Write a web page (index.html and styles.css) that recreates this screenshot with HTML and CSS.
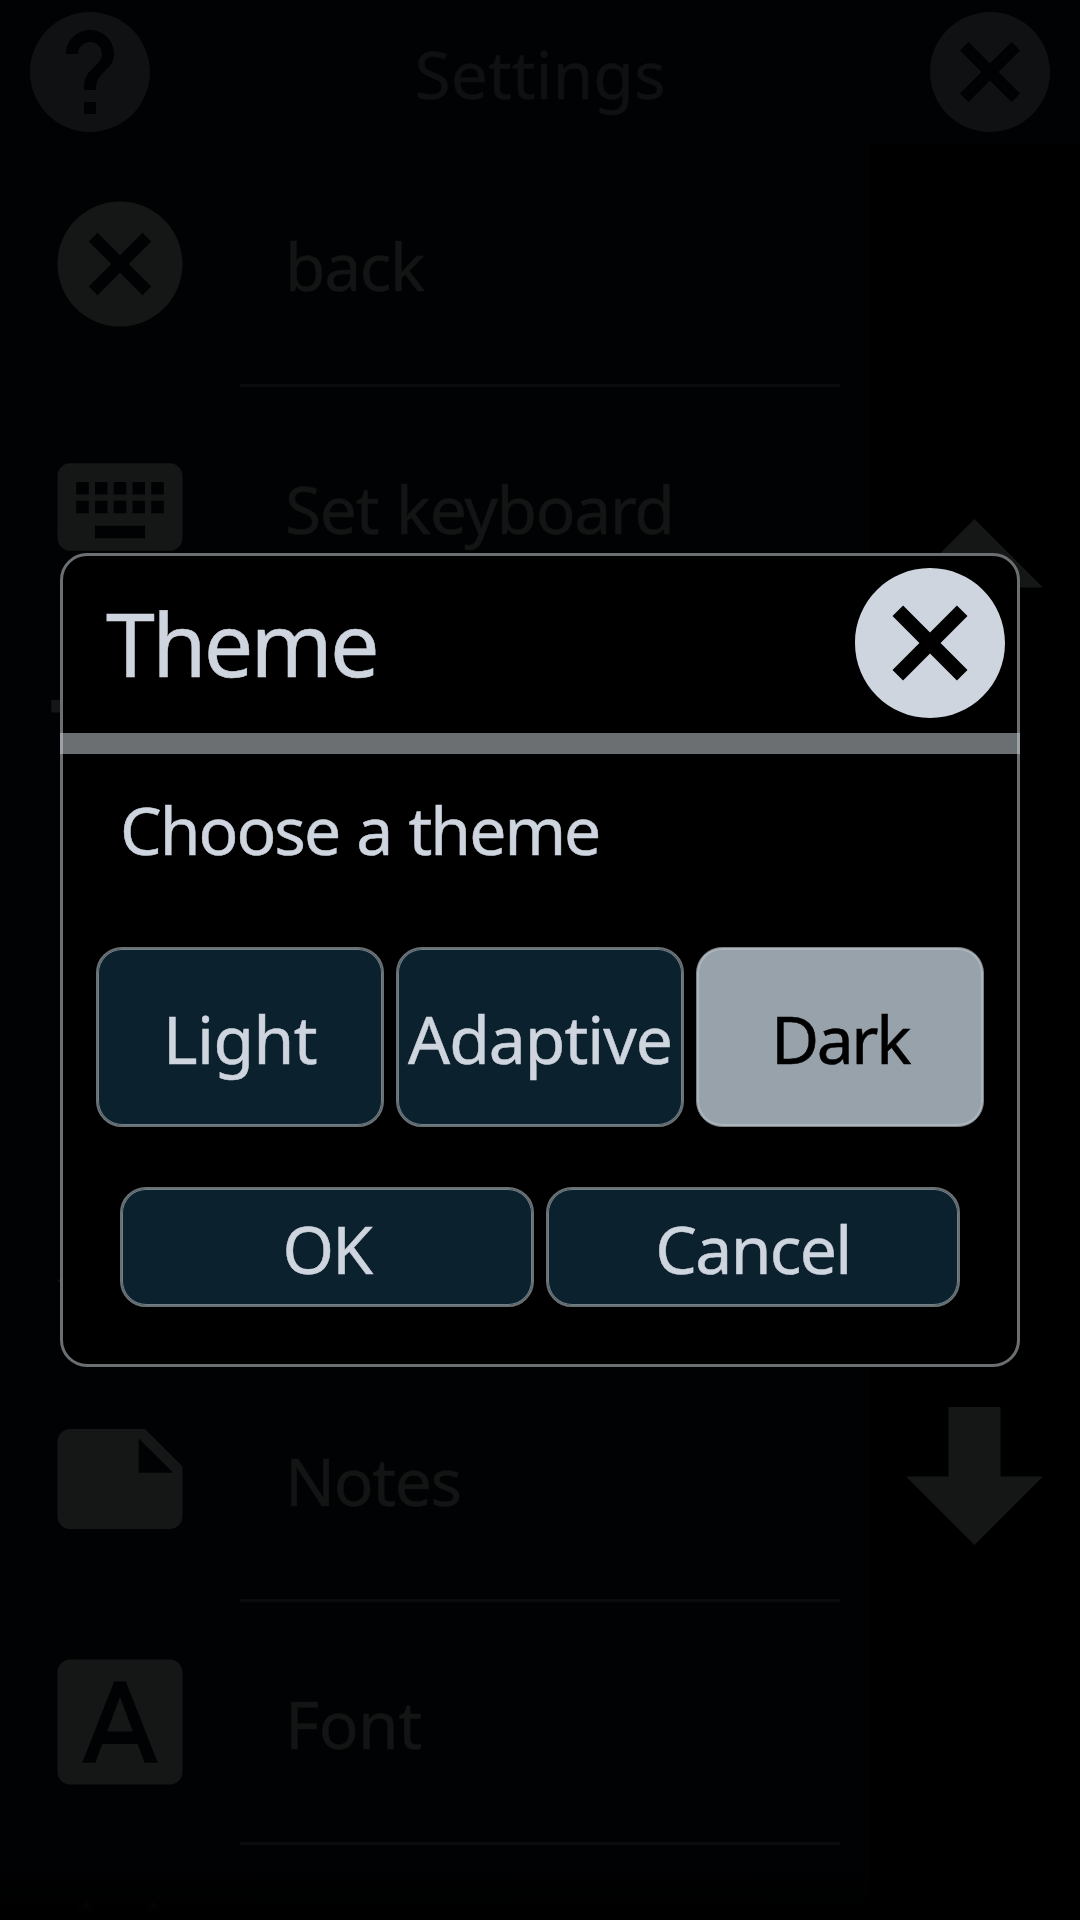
FILE: index.html
```
<!DOCTYPE html>
<html lang="en">
<head>
<meta charset="utf-8">
<title>Settings</title>
<link rel="stylesheet" href="styles.css">
</head>
<body>
<div class="screen">
  <header class="topbar">
    <svg class="topbar-icon" viewBox="0 0 24 24"><path d="M12 2C6.48 2 2 6.48 2 12s4.48 10 10 10 10-4.48 10-10S17.52 2 12 2zm1 17h-2v-2h2v2zm2.07-7.75l-.9.92C13.45 12.9 13 13.5 13 15h-2v-.5c0-1.1.45-2.1 1.17-2.83l1.24-1.26c.37-.36.59-.86.59-1.41 0-1.1-.9-2-2-2s-2 .9-2 2H8c0-2.21 1.79-4 4-4s4 1.79 4 4c0 .88-.36 1.68-.93 2.25z"/></svg>
    <h1 class="topbar-title">Settings</h1>
    <svg class="topbar-icon" viewBox="0 0 24 24"><path d="M12 2C6.47 2 2 6.47 2 12s4.47 10 10 10 10-4.47 10-10S17.53 2 12 2zm5 13.59L15.59 17 12 13.41 8.41 17 7 15.59 10.59 12 7 8.41 8.41 7 12 10.59 15.59 7 17 8.41 13.41 12 17 15.59z"/></svg>
  </header>
  <main class="content">
    <ul class="list">
      <li class="row">
        <svg class="row-icon" viewBox="0 0 24 24"><path d="M12 2C6.47 2 2 6.47 2 12s4.47 10 10 10 10-4.47 10-10S17.53 2 12 2zm5 13.59L15.59 17 12 13.41 8.41 17 7 15.59 10.59 12 7 8.41 8.41 7 12 10.59 15.59 7 17 8.41 13.41 12 17 15.59z"/></svg>
        <span class="row-label">back</span>
      </li>
      <li class="row">
        <svg class="row-icon" viewBox="0 0 24 24"><path d="M20 5H4c-1.1 0-1.99.9-1.99 2L2 17c0 1.1.9 2 2 2h16c1.1 0 2-.9 2-2V7c0-1.1-.9-2-2-2zm-9 3h2v2h-2V8zm0 3h2v2h-2v-2zM8 8h2v2H8V8zm0 3h2v2H8v-2zm-1 2H5v-2h2v2zm0-3H5V8h2v2zm9 7H8v-2h8v2zm0-4h-2v-2h2v2zm0-3h-2V8h2v2zm3 3h-2v-2h2v2zm0-3h-2V8h2v2z"/></svg>
        <span class="row-label">Set keyboard</span>
      </li>
      <li class="row">
        <svg class="row-icon" viewBox="0 0 24 24"><path d="M12.87 15.07l-2.54-2.51.03-.03c1.74-1.94 2.98-4.17 3.71-6.53H17V4h-7V2H8v2H1v1.99h11.17C11.5 7.92 10.44 9.75 9 11.35 8.07 10.32 7.3 9.19 6.69 8h-2c.73 1.63 1.73 3.17 2.98 4.56l-5.09 5.02L4 19l5-5 3.11 3.11.76-2.04zM18.5 10h-2L12 22h2l1.12-3h4.75L21 22h2l-4.5-12zm-2.62 7l1.62-4.33L19.12 17h-3.24z"/></svg>
      </li>
      <li class="row"></li>
      <li class="row">
        <svg class="row-icon" viewBox="0 0 24 24"><path d="M7 14c-1.66 0-3 1.34-3 3 0 1.31-1.16 2-2 2 .92 1.22 2.49 2 4 2 2.21 0 4-1.79 4-4 0-1.66-1.34-3-3-3zm13.71-9.37l-1.34-1.34c-.39-.39-1.02-.39-1.41 0L9 12.25 11.75 15l8.96-8.96c.39-.39.39-1.02 0-1.41z"/></svg>
      </li>
      <li class="row">
        <svg class="row-icon" viewBox="0 0 24 24"><path d="M22 10l-6-6H4c-1.1 0-2 .9-2 2v12.01c0 1.1.9 1.99 2 1.99l16-.01c1.1 0 2-.89 2-1.99v-8zm-7-4.5l5.5 5.5H15V5.5z"/></svg>
        <span class="row-label">Notes</span>
      </li>
      <li class="row">
        <svg class="row-icon" viewBox="0 0 24 24"><path d="M9.93 13.5h4.14L12 7.98zM20 2H4c-1.1 0-2 .9-2 2v16c0 1.1.9 2 2 2h16c1.1 0 2-.9 2-2V4c0-1.1-.9-2-2-2zm-4.05 16.5l-1.14-3H9.17l-1.12 3H5.96l5.11-13h1.86l5.11 13h-2.09z"/></svg>
        <span class="row-label loose">Font</span>
      </li>
      <li class="row">
        <svg class="row-icon" viewBox="0 0 24 24"><path d="M22 5.72l-4.6-3.86-1.29 1.53 4.6 3.86L22 5.72zM7.88 3.39L6.6 1.86 2 5.71l1.29 1.53 4.59-3.85zM12 4c-4.97 0-9 4.03-9 9s4.02 9 9 9 9-4.03 9-9-4.03-9-9-9z"/></svg>
      </li>
    </ul>
    <nav class="scroller">
      <div class="scroll-cell"><svg class="arrow" viewBox="0 0 137 138"><path d="M68.500 0L137 68.500H94.500V138H42.500V68.500H0z"/></svg></div>
      <div class="scroll-cell"><svg class="arrow" viewBox="0 0 137 138"><path d="M42.500 0H94.500V69.500H137L68.500 138L0 69.500H42.500z"/></svg></div>
    </nav>
  </main>
  <div class="fade"></div>
  <section class="dialog" role="dialog">
    <div class="dialog-head">
      <h2 class="dialog-title">Theme</h2>
      <svg class="dialog-close" viewBox="2 2 20 20"><path d="M12 2C6.47 2 2 6.47 2 12s4.47 10 10 10 10-4.47 10-10S17.53 2 12 2zm5 13.59L15.59 17 12 13.41 8.41 17 7 15.59 10.59 12 7 8.41 8.41 7 12 10.59 15.59 7 17 8.41 13.41 12 17 15.59z"/></svg>
    </div>
    <div class="dialog-bar"></div>
    <p class="dialog-text">Choose a theme</p>
    <div class="options">
      <button class="btn loose">Light</button>
      <button class="btn wide">Adaptive</button>
      <button class="btn selected">Dark</button>
    </div>
    <div class="actions">
      <button class="btn">OK</button>
      <button class="btn">Cancel</button>
    </div>
  </section>
</div>
</body>
</html>
```
FILE: styles.css
```
* { box-sizing: border-box; }

body {
  margin: 0;
  background: #000;
  font-family: "Noto Sans", sans-serif;
}

h1, h2, p, ul { margin: 0; padding: 0; font-weight: 400; }

svg { display: block; flex: none; }

.screen {
  position: relative;
  display: flex;
  flex-direction: column;
  width: 1080px;
  height: 1920px;
  overflow: hidden;
  background: #010204;
}

.topbar {
  display: flex;
  align-items: center;
  justify-content: space-between;
  flex: none;
  height: 144px;
  padding: 0 18px;
}

.topbar-icon { width: 144px; height: 144px; fill: #0f1113; }

.topbar-title {
  padding-top: 1px;
  font-size: 66px;
  color: #0f1012;
  -webkit-text-stroke: 0.5px;
}

.content { display: flex; flex: 1; min-height: 0; }

.list { width: 870px; list-style: none; overflow: hidden; }

.row {
  display: flex;
  align-items: center;
  gap: 90px;
  height: 243px;
  padding: 0 30px 3px 45px;
  background: linear-gradient(#0a0b0d, #0a0b0d) 240px 240px / 600px 3px no-repeat;
}

.row-icon { width: 150px; height: 150px; fill: #151716; }

.row-label {
  padding-top: 1px;
  font-size: 66px;
  letter-spacing: -1.4px;
  word-spacing: 2px;
  color: #131514;
  white-space: nowrap;
  -webkit-text-stroke: 0.5px;
}

.scroller {
  display: flex;
  flex-direction: column;
  width: 210px;
  background: #000;
}

.scroll-cell {
  display: flex;
  flex: 1;
  align-items: center;
  justify-content: center;
  padding: 0 1px 1px 0;
}

.arrow { width: 137px; height: 138px; fill: #151716; }

.fade {
  position: absolute;
  left: 0;
  right: 0;
  bottom: 0;
  height: 60px;
  background: linear-gradient(rgba(0, 0, 0, 0), #000 90%);
}

.dialog {
  position: absolute;
  top: 553px;
  left: 60px;
  width: 960px;
  height: 814px;
  border: 3px solid #6b6f72;
  border-radius: 27px;
  background: #000;
  color: #cfd5de;
  -webkit-text-stroke: 0.5px;
}

.dialog-head {
  display: flex;
  align-items: center;
  justify-content: space-between;
  height: 177px;
  padding: 0 12px 3px 43px;
}

.dialog-title { font-size: 88px; line-height: 120px; letter-spacing: -2.8px; }

.dialog-close { width: 150px; height: 150px; fill: #cfd5de; }

.dialog-bar {
  height: 21px;
  margin: 0 -3px;
  border: solid #9ba1a5;
  border-width: 0 3px;
  background: #6b6f72;
}

.dialog-text {
  height: 193px;
  padding: 30px 57px 0;
  font-size: 66px;
  line-height: 90px;
  letter-spacing: -2px;
  word-spacing: 2px;
}

.options {
  display: grid;
  grid-template-columns: repeat(3, 288px);
  justify-content: center;
  gap: 12px;
  height: 180px;
}

.actions {
  display: grid;
  grid-template-columns: repeat(2, 414px);
  justify-content: center;
  gap: 12px;
  height: 120px;
  margin-top: 60px;
}

.btn {
  padding: 2px 0 0;
  border: 2px solid #6b7073;
  border-radius: 26px;
  background: #0c212e;
  box-shadow: inset 0 0 0 1px #70808a;
  color: #cfd5de;
  font: 400 66px "Noto Sans", sans-serif;
  letter-spacing: -1.7px;
  -webkit-text-stroke: 0.5px;
}

.btn.wide { letter-spacing: -1px; }

.btn.selected {
  border: 1px solid #7b8083;
  background: #98a2aa;
  box-shadow: inset 0 0 0 2px #acb5bb;
  color: #000;
  letter-spacing: -2.4px;
}

.loose, .btn.loose { letter-spacing: -0.6px; }
```
